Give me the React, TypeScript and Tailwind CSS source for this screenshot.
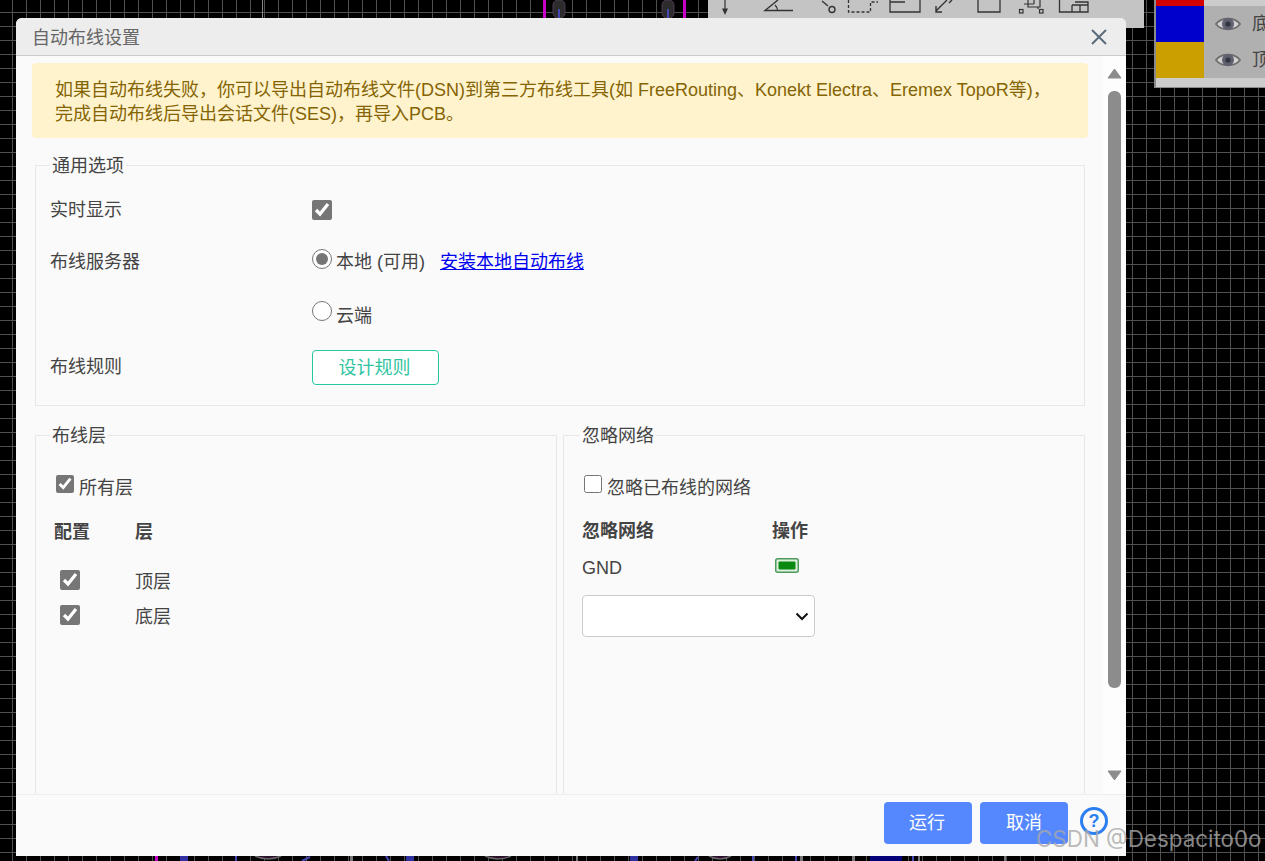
import React from "react";

const FONT = "font-['Liberation_Sans','Noto_Sans_CJK_SC',sans-serif]";

function Eye() {
  return (
    <svg width="26" height="18" viewBox="0 0 26 18" className="shrink-0">
      <path d="M1 9 C6 2 20 2 25 9 C20 16 6 16 1 9 Z" fill="#d2d2d2" stroke="#6f6f6f" strokeWidth="1.8" />
      <circle cx="13" cy="9" r="6" fill="#5f6070" />
      <circle cx="13" cy="9" r="2.6" fill="#33343f" />
    </svg>
  );
}

function Toolbar() {
  return (
    <svg width="436" height="28" viewBox="708 0 436 28" fill="none" stroke="#333" strokeWidth="1.2">
      <path d="M725 0V13" />
      <path d="M722 8.5L725 15L728 8.5Z" fill="#333" stroke="none" />
      <path d="M793 10.5H765L778 0" strokeWidth="1.4" />
      <path d="M775 5Q777.5 7.5 777.5 10" />
      <path d="M822 1L828 6" strokeWidth="1.4" />
      <circle cx="832" cy="9.5" r="3" strokeWidth="1.4" />
      <path d="M848.5 0V12H870.5V2H878" strokeDasharray="3 2" strokeWidth="1.3" />
      <path d="M890 0V12H920V0M890 2H905" strokeWidth="1.3" />
      <path d="M947 0L936 11M936 6V12H942" strokeWidth="1.4" />
      <path d="M952 0L949 3" strokeWidth="1.4" />
      <path d="M978 0V12H1000V0" strokeWidth="1.3" />
      <rect x="1019.5" y="9.5" width="3.5" height="3.5" strokeWidth="1.2" />
      <rect x="1039.5" y="9.5" width="3.5" height="3.5" strokeWidth="1.2" />
      <path d="M1028 0V7H1040V0M1034 0V4M1024 4H1034M1038 7V9" strokeWidth="1.2" />
      <path d="M1059.5 0V12H1088V2H1075M1072 5H1088M1072 5V12M1080 5V12" strokeWidth="1.3" />
    </svg>
  );
}

function CanvasMarks() {
  return (
    <svg width="1265" height="861" viewBox="0 0 1265 861" className="absolute left-0 top-0">
      <rect x="262" y="0" width="1" height="18" fill="#888" />
      <rect x="543" y="0" width="3" height="18" fill="#c800c8" />
      <rect x="683" y="0" width="3" height="18" fill="#c800c8" />
      <rect x="553" y="0" width="12" height="18" rx="5" fill="#2c2c2c" stroke="#4b3a52" />
      <rect x="558" y="9" width="2" height="9" fill="#4646b4" />
      <rect x="662" y="0" width="12" height="18" rx="5" fill="#2c2c2c" stroke="#4b3a52" />
      <rect x="667" y="9" width="2" height="9" fill="#4646b4" />
      <rect x="155" y="856" width="3" height="5" fill="#c800c8" />
      <rect x="180" y="856" width="8" height="5" fill="#3030a0" />
      <rect x="235" y="856" width="2" height="5" fill="#4646b4" />
      <path d="M255 856Q268 862 281 856" stroke="#666" strokeWidth="1.5" fill="#2a102a" />
      <path d="M302 861L310 857" stroke="#4646b4" strokeWidth="2" />
      <rect x="350" y="856" width="3" height="5" fill="#777" />
      <path d="M386 856L389 861" stroke="#4646b4" strokeWidth="2" />
      <rect x="406" y="856" width="8" height="5" fill="#3030a0" />
      <path d="M485 856Q498 862 511 856" stroke="#666" strokeWidth="1.5" fill="#2a102a" />
      <rect x="576" y="856" width="2" height="5" fill="#777" />
      <rect x="630" y="856" width="8" height="5" fill="#3030a0" />
      <path d="M695 861L698 857" stroke="#4646b4" strokeWidth="2" />
      <path d="M709 856Q720 862 731 856" stroke="#666" strokeWidth="1.5" fill="#2a102a" />
      <rect x="752" y="856" width="2" height="5" fill="#4646b4" />
      <rect x="795" y="856" width="2" height="5" fill="#4646b4" />
      <rect x="800" y="856" width="3" height="5" fill="#777" />
      <rect x="852" y="856" width="3" height="5" fill="#777" />
      <rect x="870" y="856" width="32" height="5" fill="#000078" />
      <rect x="912" y="856" width="2" height="5" fill="#4646b4" />
      <rect x="918" y="856" width="2" height="5" fill="#777" />
      <rect x="1004" y="856" width="2" height="5" fill="#777" />
    </svg>
  );
}

function Radio({ checked }: { checked?: boolean }) {
  return (
    <input
      type="radio"
      name="server"
      defaultChecked={checked}
      className="mb-[7px] h-5 w-5 shrink-0 accent-[#767676]"
    />
  );
}

function Triangle({ down }: { down?: boolean }) {
  return (
    <svg width="15" height="11" viewBox="0 0 15 11" className="shrink-0">
      <path d={down ? "M1 1H14L7.5 10Z" : "M1 10H14L7.5 1Z"} fill="#8c8c8c" stroke="#8c8c8c" strokeLinejoin="round" />
    </svg>
  );
}

export default function App() {
  return (
    <div
      className={
        FONT +
        " relative h-[861px] w-[1265px] overflow-hidden bg-black bg-[linear-gradient(#4f4f4f_1px,transparent_1px),linear-gradient(90deg,#4f4f4f_1px,transparent_1px)] bg-size-[14px_14px] bg-position-[12px_12px] text-[18px] leading-[27px] text-[#444]"
      }
    >
      <CanvasMarks />

      {/* floating toolbar */}
      <div className="absolute left-[708px] top-0 h-[28px] w-[436px] bg-[#c4c4c4]">
        <Toolbar />
      </div>

      {/* floating layers panel */}
      <div className="absolute left-[1154px] top-0 flex h-[88px] w-[111px] flex-col overflow-hidden border-b border-l-2 border-[#8a8a8a] bg-[#ccc]">
        <div className="h-[6px] w-[48px] bg-[#d40000]" />
        {[
          ["bg-[#0000cc]", "底层"],
          ["bg-[#cc9f00]", "顶层"],
        ].map(([c, t]) => (
          <div key={t} className="flex h-[36px] bg-[#b0b0b0]">
            <div className={"h-full w-[48px] shrink-0 " + c} />
            <div className="ml-[11px] flex items-center">
              <Eye />
              <span className="ml-[11px] whitespace-nowrap text-[#444]">{t}</span>
            </div>
          </div>
        ))}
      </div>

      {/* dialog */}
      <div className="absolute left-[16px] top-[18px] flex h-[838px] w-[1110px] flex-col overflow-hidden rounded-t-[6px] bg-[#fafafa]">
        <div className="flex h-[38px] shrink-0 items-center justify-between border-b border-[#ccc] bg-[#ededed] pl-[16px] pr-[18px]">
          <span className="pt-[3px] text-[#666]">自动布线设置</span>
          <svg width="18" height="18" viewBox="0 0 18 18" className="mt-[1px]">
            <path d="M2 2L16 16M16 2L2 16" stroke="#5b6b7b" strokeWidth="2" />
          </svg>
        </div>

        <div className="flex min-h-0 flex-1">
          <div className="min-w-0 flex-1 overflow-hidden pl-[16px] pr-[15px] pt-[7px]">
            <div className="rounded-[4px] bg-[#fff3cd] pb-[12.5px] pl-[23px] pt-[14.5px] leading-[24px] text-[#856404]">
              如果自动布线失败，你可以导出自动布线文件(DSN)到第三方布线工具(如 FreeRouting、Konekt Electra、Eremex TopoR等)，
              <br />
              完成自动布线后导出会话文件(SES)，再导入PCB。
            </div>

            <fieldset className="ml-[3px] mt-[13px] w-[1050px] border border-[#e8e8e8] px-[14px] pb-[13px] pt-[4px]">
              <legend className="px-[2px] pt-[2px]">通用选项</legend>
              <div className="grid grid-cols-[262px_1fr] auto-rows-[52px] items-center">
                <div>实时显示</div>
                <div className="flex items-center">
                  <input type="checkbox" defaultChecked className="h-5 w-5 shrink-0 accent-[#767676]" />
                </div>
                <div>布线服务器</div>
                <div className="flex items-center">
                  <Radio checked />
                  <span className="ml-[4px]">本地 (可用)</span>
                  <a href="#" className="ml-[15px] text-[#0000ee] underline">
                    安装本地自动布线
                  </a>
                </div>
                <div />
                <div className="flex items-center">
                  <Radio />
                  <span className="ml-[4px] pt-[4px]">云端</span>
                </div>
                <div className="pt-[2px]">布线规则</div>
                <div className="flex items-center pt-[3px]">
                  <button className="h-[35px] w-[127px] rounded-[4px] border border-[#26c6a0] bg-white pr-[2px] pt-[2px] text-[#2ec4a0]">
                    设计规则
                  </button>
                </div>
              </div>
            </fieldset>

            <div className="ml-[3px] mt-[15px] flex w-[1050px] gap-[6px]">
              <fieldset className="h-[500px] w-[522px] shrink-0 border border-[#e8e8e8] px-[14px] pt-[25px]">
                <legend className="px-[2px] pt-[2px]">布线层</legend>
                <div className="flex items-start pl-[6px]">
                  <input type="checkbox" defaultChecked className="h-[18px] w-[18px] shrink-0 accent-[#767676]" />
                  <span className="ml-[5px]">所有层</span>
                </div>
                <div className="mt-[17px] flex pl-[4px] font-bold">
                  <span className="w-[81px]">配置</span>
                  <span>层</span>
                </div>
                <div className="mt-[23px] flex items-start pl-[10px]">
                  <input type="checkbox" defaultChecked className="mt-[1px] h-5 w-5 shrink-0 accent-[#767676]" />
                  <span className="ml-[55px]">顶层</span>
                </div>
                <div className="mt-[8px] flex items-start pl-[10px]">
                  <input type="checkbox" defaultChecked className="mt-[1px] h-5 w-5 shrink-0 accent-[#767676]" />
                  <span className="ml-[55px]">底层</span>
                </div>
              </fieldset>

              <fieldset className="h-[500px] w-[522px] shrink-0 border border-[#e8e8e8] pl-[18px] pr-[14px] pt-[25px]">
                <legend className="-ml-[2px] px-[2px] pt-[2px]">忽略网络</legend>
                <div className="flex items-start pl-[2px]">
                  <input type="checkbox" className="h-[18px] w-[18px] shrink-0 accent-[#767676]" />
                  <span className="ml-[5px]">忽略已布线的网络</span>
                </div>
                <div className="mt-[16px] flex font-bold">
                  <span className="w-[190px]">忽略网络</span>
                  <span>操作</span>
                </div>
                <div className="mt-[10px] flex items-start">
                  <span className="w-[193px]">GND</span>
                  <svg width="24" height="15" viewBox="0 0 24 15" className="mt-[3px]">
                    <rect x="0.75" y="0.75" width="22.5" height="13.5" rx="2" fill="#dff0df" stroke="#4e9a5c" strokeWidth="1.5" />
                    <rect x="3.5" y="3.5" width="17" height="8" rx="1" fill="#0b8a12" />
                  </svg>
                </div>
                <div className="relative mt-[12.5px] h-[42px] w-[233px] rounded-[4px] border border-[#ccc] bg-white">
                  <svg width="14" height="9" viewBox="0 0 14 9" className="absolute right-[5px] top-[16px]">
                    <path d="M1.5 1.5L7 7L12.5 1.5" fill="none" stroke="#111" strokeWidth="2" />
                  </svg>
                </div>
              </fieldset>
            </div>
          </div>

          {/* scrollbar */}
          <div className="flex w-[23px] shrink-0 flex-col items-center bg-[#fdfdfd] pt-[12px]">
            <Triangle />
            <div className="mt-[12px] h-[597px] w-[13px] rounded-[6px] bg-[#8c8c8c]" />
            <div className="mt-[82px]">
              <Triangle down />
            </div>
          </div>
        </div>

        <div className="flex h-[62px] shrink-0 items-start justify-end gap-[8px] border-t border-[#eee] pr-[18px] pt-[7px]">
          <button className="h-[42px] w-[88px] rounded-[4px] bg-[#5588ff] pr-[2px] text-white">运行</button>
          <button className="h-[42px] w-[88px] rounded-[4px] bg-[#5588ff] text-white">取消</button>
          <div className="ml-[4px] mt-[5px] flex h-[28px] w-[28px] items-center justify-center rounded-full border-[3px] border-[#2b7ff0] text-[18px] font-bold leading-none text-[#2b7ff0]">
            ?
          </div>
        </div>
      </div>

      {/* watermark */}
      <div className="absolute left-[1036px] top-[825px] whitespace-nowrap font-['Inter',sans-serif] text-[22.4px] leading-[27px] text-[#a8a8a8]/80">
        CSDN @Despacito0o
      </div>
    </div>
  );
}
